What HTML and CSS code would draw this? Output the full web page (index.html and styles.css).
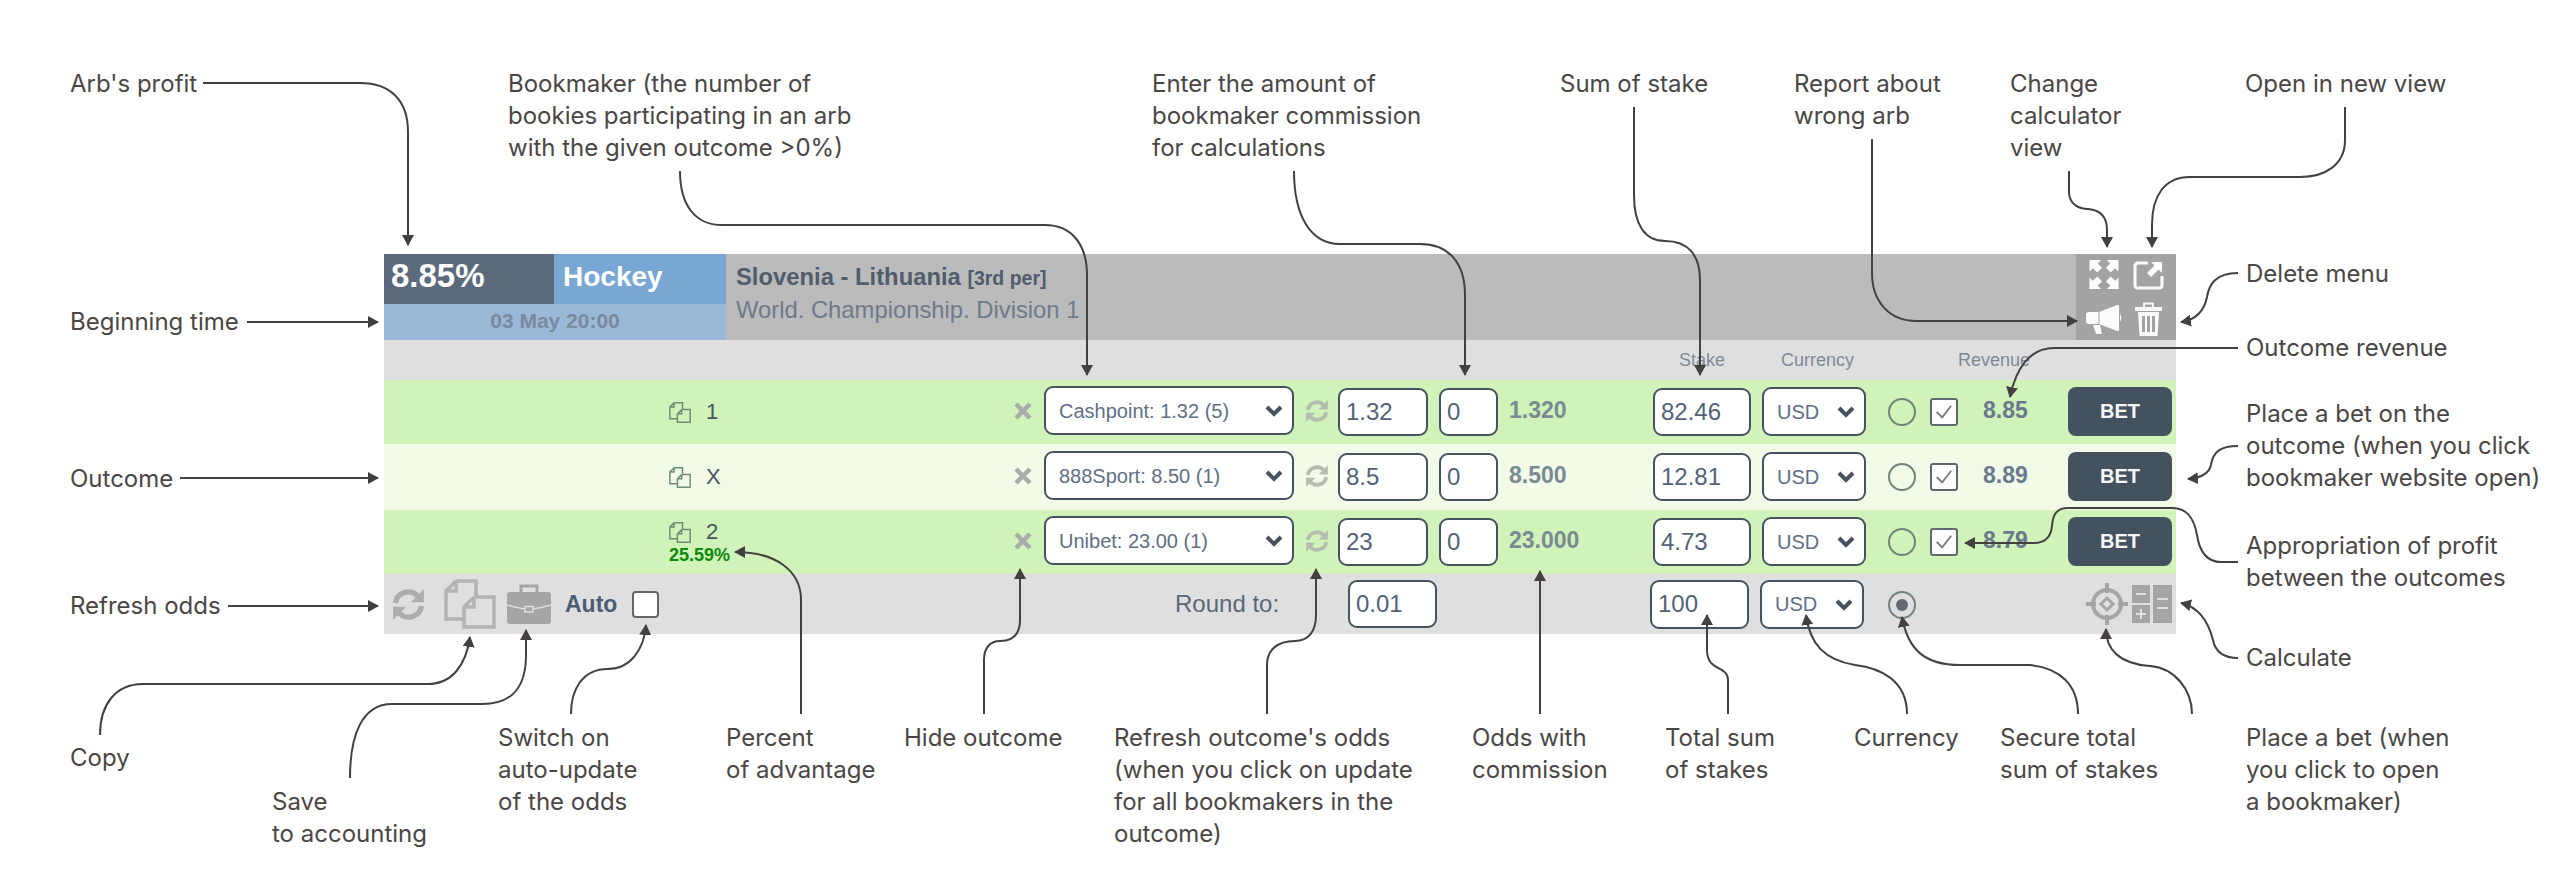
FILE: index.html
```html
<!DOCTYPE html>
<html lang="en">
<head>
    <meta charset="UTF-8">
    <meta name="viewport" content="width=device-width, initial-scale=1.0">
    <title>Arb calculator</title>
    <link rel="stylesheet" href="styles.css">
</head>
<body>
    <svg class="icon-defs" width="0" height="0">
        <symbol id="i-sync" viewBox="0 0 24 24">
            <path d="M3.5 11A8.5 8.5 0 0 1 18 6.5M20.5 13A8.5 8.5 0 0 1 6 17.5" fill="none" stroke="currentColor" stroke-width="3.4"/>
            <path d="M22 2V10.500H13.500ZM2 22V13.500H10.500Z" fill="currentColor"/>
        </symbol>
        <symbol id="i-copy" viewBox="0 0 52 50">
            <path d="M12 2H32V18M12 2L2 12V40H20M12 2V12H2M32 18H50V48H20V28L30 18M30 18V28H20" fill="none" stroke="currentColor" stroke-width="3.500"/>
        </symbol>
        <symbol id="i-x" viewBox="0 0 18 18">
            <path d="M2 2L16 16M16 2L2 16" fill="none" stroke="currentColor" stroke-width="4.500"/>
        </symbol>
        <symbol id="i-chevron" viewBox="0 0 18 12">
            <path d="M2 2L9 9L16 2" fill="none" stroke="currentColor" stroke-width="4"/>
        </symbol>
        <symbol id="i-check" viewBox="0 0 20 20">
            <path d="M2 10L8 16L18 3" fill="none" stroke="currentColor" stroke-width="2"/>
        </symbol>
    </svg>

    <div class="canvas">
        <!-- Calculateur -->
        <section class="calc">
            <header class="calc-head">
                <div class="arb-side">
                    <div class="arb-profit">8.85%</div>
                    <div class="arb-sport">Hockey</div>
                    <div class="arb-date">03 May 20:00</div>
                </div>
                <div class="arb-event">
                    <div class="event-title">Slovenia - Lithuania <small>[3rd per]</small></div>
                    <div class="event-league">World. Championship. Division 1</div>
                </div>
                <div class="head-tools">
                    <svg class="tool-expand" viewBox="0 0 30 30">
                        <g id="corner"><path d="M0 0H12L8.500 3.500L13 8L8 13L3.500 8.500L0 12Z" fill="currentColor"/></g>
                        <use href="#corner" transform="matrix(-1 0 0 1 30 0)"/>
                        <use href="#corner" transform="matrix(1 0 0 -1 0 30)"/>
                        <use href="#corner" transform="matrix(-1 0 0 -1 30 30)"/>
                    </svg>
                    <svg class="tool-open" viewBox="0 0 31 31">
                        <path d="M15 4H5Q2 4 2 7V26Q2 29 5 29H26Q29 29 29 26V17" fill="none" stroke="currentColor" stroke-width="3"/>
                        <path d="M18 3H29V14L25.500 10.500L18 18L14 14L21.500 6.500Z" fill="currentColor"/>
                    </svg>
                    <svg class="tool-report" viewBox="0 0 36 30">
                        <path d="M0 11Q0 8 3 8H13L31 1H33V27H31L13 20H3Q0 20 0 17ZM7 21H14L16 30H10ZM34 10Q36.500 14 34 18Z" fill="currentColor"/>
                        <path d="M13 8V20" stroke="#a3a3a3" stroke-width="1"/>
                    </svg>
                    <svg class="tool-trash" viewBox="0 0 27 34">
                        <path d="M9 5V1.500H18V5" fill="none" stroke="currentColor" stroke-width="2"/>
                        <path d="M0 5H27V9H0ZM3 10H24L22.500 34H4.500Z" fill="currentColor"/>
                        <path d="M7 14H10V30H7ZM12 14H15V30H12ZM17 14H20V30H17Z" fill="#a3a3a3"/>
                    </svg>
                </div>
            </header>

            <div class="calc-labels">
                <span class="label-stake">Stake</span>
                <span class="label-currency">Currency</span>
                <span class="label-revenue">Revenue</span>
            </div>

            <div class="outcome">
                <div class="outcome-name"><svg class="copy-small"><use href="#i-copy"/></svg><span>1</span></div>
                <svg class="hide-x"><use href="#i-x"/></svg>
                <div class="select-wrap book"><select><option>Cashpoint: 1.32 (5)</option></select><svg class="chevron"><use href="#i-chevron"/></svg></div>
                <svg class="odds-sync"><use href="#i-sync"/></svg>
                <input class="field odds" type="text" value="1.32">
                <input class="field comm" type="text" value="0">
                <div class="odds-result">1.320</div>
                <input class="field stake" type="text" value="82.46">
                <div class="select-wrap money"><select><option>USD</option></select><svg class="chevron"><use href="#i-chevron"/></svg></div>
                <span class="radio"></span>
                <span class="check"><svg><use href="#i-check"/></svg></span>
                <div class="revenue">8.85</div>
                <button class="bet">BET</button>
            </div>

            <div class="outcome outcome-light">
                <div class="outcome-name"><svg class="copy-small"><use href="#i-copy"/></svg><span>X</span></div>
                <svg class="hide-x"><use href="#i-x"/></svg>
                <div class="select-wrap book"><select><option>888Sport: 8.50 (1)</option></select><svg class="chevron"><use href="#i-chevron"/></svg></div>
                <svg class="odds-sync"><use href="#i-sync"/></svg>
                <input class="field odds" type="text" value="8.5">
                <input class="field comm" type="text" value="0">
                <div class="odds-result">8.500</div>
                <input class="field stake" type="text" value="12.81">
                <div class="select-wrap money"><select><option>USD</option></select><svg class="chevron"><use href="#i-chevron"/></svg></div>
                <span class="radio"></span>
                <span class="check"><svg><use href="#i-check"/></svg></span>
                <div class="revenue">8.89</div>
                <button class="bet">BET</button>
            </div>

            <div class="outcome">
                <div class="outcome-name outcome-name-pct">
                    <div class="outcome-line"><svg class="copy-small"><use href="#i-copy"/></svg><span>2</span></div>
                    <div class="advantage">25.59%</div>
                </div>
                <svg class="hide-x"><use href="#i-x"/></svg>
                <div class="select-wrap book"><select><option>Unibet: 23.00 (1)</option></select><svg class="chevron"><use href="#i-chevron"/></svg></div>
                <svg class="odds-sync"><use href="#i-sync"/></svg>
                <input class="field odds" type="text" value="23">
                <input class="field comm" type="text" value="0">
                <div class="odds-result">23.000</div>
                <input class="field stake" type="text" value="4.73">
                <div class="select-wrap money"><select><option>USD</option></select><svg class="chevron"><use href="#i-chevron"/></svg></div>
                <span class="radio"></span>
                <span class="check"><svg><use href="#i-check"/></svg></span>
                <div class="revenue">8.79</div>
                <button class="bet">BET</button>
            </div>

            <footer class="calc-foot">
                <svg class="foot-sync"><use href="#i-sync"/></svg>
                <svg class="foot-copy"><use href="#i-copy"/></svg>
                <svg class="foot-case" viewBox="0 0 44 40">
                    <path d="M14 9V2H30V9" fill="none" stroke="#a5a5a5" stroke-width="3"/>
                    <rect y="8" width="44" height="32" rx="3" fill="#a5a5a5"/>
                    <path d="M0 21Q10 24 18 25M26 25Q34 24 44 21" fill="none" stroke="#dfdfdf" stroke-width="1.500"/>
                    <rect x="18" y="22.500" width="8" height="5.500" fill="none" stroke="#dfdfdf" stroke-width="1.500"/>
                </svg>
                <div class="auto-label">Auto</div>
                <span class="auto-box"></span>
                <div class="round-label">Round to:</div>
                <input class="field round" type="text" value="0.01">
                <input class="field total" type="text" value="100">
                <div class="select-wrap money money-total"><select><option>USD</option></select><svg class="chevron"><use href="#i-chevron"/></svg></div>
                <span class="radio radio-on"></span>
                <svg class="foot-target" viewBox="0 0 42 42">
                    <circle cx="21" cy="21" r="14" fill="none" stroke="#a5a5a5" stroke-width="4"/>
                    <path d="M21 0V10M21 32V42M0 21H10M32 21H42" stroke="#a5a5a5" stroke-width="4"/>
                    <path d="M21 15L27 21L21 27L15 21Z" fill="none" stroke="#a5a5a5" stroke-width="3"/>
                </svg>
                <svg class="foot-calc" viewBox="0 0 40 38">
                    <path d="M0 0H18V18H0ZM0 20H18V38H0ZM21 0H40V38H21Z" fill="#a5a5a5"/>
                    <path d="M4 9H14M4 29H14M9 24V34M25 14H36M25 23H36" stroke="#dfdfdf" stroke-width="2"/>
                </svg>
            </footer>
        </section>

        <!-- Fleches -->
        <svg class="arrows" viewBox="0 0 2560 888">
            <defs>
                <marker id="head" markerUnits="userSpaceOnUse" markerWidth="12" markerHeight="12" refX="10" refY="6" orient="auto">
                    <path d="M0 0L11 6L0 12Z" fill="#454040"/>
                </marker>
            </defs>
            <g fill="none" stroke="#454040" stroke-width="2" marker-end="url(#head)">
                <path d="M203 83H360C390 83 408 100 408 132V245"/>
                <path d="M680 171C680 205 695 225 722 225H1045C1072 225 1087 245 1087 275V375"/>
                <path d="M1294 171C1294 215 1310 244 1340 244H1420C1448 244 1465 262 1465 295V375"/>
                <path d="M1634 107V195C1634 225 1645 241 1665 241C1688 241 1700 255 1700 280V375"/>
                <path d="M1872 139V273C1872 302 1890 321 1916 321H2077"/>
                <path d="M2069 171V192C2069 205 2080 209 2088 209C2100 210 2107 216 2107 230V247"/>
                <path d="M2345 107V140C2345 165 2325 177 2300 177H2190C2165 177 2152 195 2152 225V247"/>
                <path d="M2238 273C2215 273 2209 285 2207 297C2204 312 2195 320 2181 322"/>
                <path d="M2238 348H2054C2030 348 2016 368 2010 397"/>
                <path d="M2238 446C2220 446 2213 452 2211 465C2209 474 2200 478 2188 479"/>
                <path d="M2238 562H2221C2205 562 2199 548 2197 535C2194 518 2187 508 2172 508H2068C2056 508 2053 515 2052 526C2051 536 2046 543 2034 543H1965"/>
                <path d="M2238 658C2222 658 2215 650 2213 640C2208 620 2198 607 2181 603"/>
                <path d="M247 322H378"/>
                <path d="M180 478H378"/>
                <path d="M228 606H378"/>
                <path d="M100 735C100 705 115 684 143 684H428C452 684 466 665 470 637"/>
                <path d="M350 778C350 735 362 704 392 704H482C510 704 526 690 526 655V630"/>
                <path d="M571 714C571 690 582 669 608 669C630 669 644 650 646 625"/>
                <path d="M801 714V600C801 570 775 552 735 552"/>
                <path d="M984 714V660C984 648 990 641 1000 641C1012 641 1020 635 1020 620V569"/>
                <path d="M1267 714V665C1267 650 1277 641 1295 641C1308 641 1316 632 1316 615V569"/>
                <path d="M1540 714V571"/>
                <path d="M1728 714V680C1728 665 1707 672 1707 650V615"/>
                <path d="M1907 714C1907 680 1880 668 1855 665C1825 660 1810 645 1806 615"/>
                <path d="M2078 714C2078 685 2060 668 2030 665H1960C1925 665 1908 650 1902 617"/>
                <path d="M2192 714C2192 690 2175 668 2150 666C2120 664 2106 650 2106 629"/>
            </g>
        </svg>

        <!-- Legendes -->
        <div class="note n-profit">Arb's profit</div>
        <div class="note n-book">Bookmaker (the number of<br>bookies participating in an arb<br>with the given outcome &gt;0%)</div>
        <div class="note n-comm">Enter the amount of<br>bookmaker commission<br>for calculations</div>
        <div class="note n-sum">Sum of stake</div>
        <div class="note n-report">Report about<br>wrong arb</div>
        <div class="note n-view">Change<br>calculator<br>view</div>
        <div class="note n-open">Open in new view</div>
        <div class="note n-delete">Delete menu</div>
        <div class="note n-revenue">Outcome revenue</div>
        <div class="note n-place">Place a bet on the<br>outcome (when you click<br>bookmaker website open)</div>
        <div class="note n-approp">Appropriation of profit<br>between the outcomes</div>
        <div class="note n-calc">Calculate</div>
        <div class="note n-begin">Beginning time</div>
        <div class="note n-outcome">Outcome</div>
        <div class="note n-refresh">Refresh odds</div>
        <div class="note n-copy">Copy</div>
        <div class="note n-save">Save<br>to accounting</div>
        <div class="note n-auto">Switch on<br>auto-update<br>of the odds</div>
        <div class="note n-percent">Percent<br>of advantage</div>
        <div class="note n-hide">Hide outcome</div>
        <div class="note n-sync">Refresh outcome's odds<br>(when you click on update<br>for all bookmakers in the<br>outcome)</div>
        <div class="note n-odds">Odds with<br>commission</div>
        <div class="note n-total">Total sum<br>of stakes</div>
        <div class="note n-currency">Currency</div>
        <div class="note n-secure">Secure total<br>sum of stakes</div>
        <div class="note n-bet">Place a bet (when<br>you click to open<br>a bookmaker)</div>
    </div>
</body>
</html>
```

FILE: styles.css
```css
body {
    font-family: "Liberation Sans", Arial, sans-serif;
    margin: 0;
    padding: 0;
    background-color: white;
}

.icon-defs {
    display: block;
    position: absolute;
}

.canvas {
    position: relative;
    width: 2560px;
    height: 888px;
    overflow: hidden;
}

/* Calculateur */
.calc {
    position: absolute;
    left: 384px;
    top: 254px;
    width: 1792px;
    color: #4a5563;
}

/* Entete */
.calc-head {
    display: flex;
    height: 86px;
    background-color: #bbbbbb;
}

.arb-side {
    display: grid;
    grid-template-columns: 170px 172px;
    grid-template-rows: 50px 36px;
    width: 342px;
}

.arb-profit {
    background-color: #5a6a7c;
    color: white;
    font-size: 33px;
    font-weight: bold;
    line-height: 44px;
    padding-left: 7px;
}

.arb-sport {
    background-color: #78a7d3;
    color: white;
    font-size: 28px;
    font-weight: bold;
    line-height: 46px;
    padding-left: 9px;
}

.arb-date {
    grid-column: 1 / 3;
    background-color: #9ab9d8;
    color: #7a8a9e;
    font-size: 21px;
    font-weight: bold;
    line-height: 34px;
    text-align: center;
}

.arb-event {
    flex: 1;
    padding: 9px 0 0 10px;
}

.event-title {
    color: #515c6c;
    font-size: 23.800px;
    font-weight: bold;
    line-height: 28px;
}

.event-title small {
    font-size: 19.500px;
}

.event-league {
    color: #6f7a8b;
    font-size: 23.800px;
    line-height: 36px;
}

.head-tools {
    display: grid;
    grid-template-columns: 36px 31px;
    grid-template-rows: 34px 34px;
    column-gap: 11px;
    row-gap: 11px;
    align-items: center;
    justify-items: center;
    box-sizing: border-box;
    width: 100px;
    padding: 3px 0 0 10px;
    background-color: #a3a3a3;
    color: #fbfbfb;
}

.tool-expand {
    width: 30px;
    height: 29px;
}

.tool-open {
    width: 31px;
    height: 31px;
}

.tool-report {
    width: 36px;
    height: 30px;
}

.tool-trash {
    width: 27px;
    height: 34px;
}

/* Ligne des titres */
.calc-labels {
    display: flex;
    height: 40px;
    line-height: 40px;
    padding-left: 1295px;
    background-color: #dfdfdf;
    color: #7f8a97;
    font-size: 18px;
}

.label-stake {
    width: 102px;
}

.label-currency {
    width: 177px;
}

/* Lignes des issues */
.outcome {
    display: grid;
    grid-template-columns: 345px 30px 260px 34px 101px 70px 144px 109px 126px 42px 53px 85px 108px;
    align-items: center;
    justify-items: start;
    height: 64px;
    box-sizing: border-box;
    padding: 0 0 3px 285px;
    background-color: #cff3b8;
}

.outcome-light {
    height: 66px;
    background-color: #f1fbe7;
}

.outcome-name,
.outcome-line {
    display: flex;
    align-items: center;
    font-size: 22px;
}

.outcome-name {
    padding-top: 3px;
}

.outcome-name-pct {
    display: block;
    padding-top: 0;
}

.outcome-line {
    height: 28px;
}

.copy-small {
    width: 22px;
    height: 23px;
    margin-right: 15px;
    color: #6f8c7a;
}

.advantage {
    color: #0c8a0c;
    font-size: 18px;
    font-weight: bold;
    line-height: 16px;
    margin-top: 1px;
}

.hide-x {
    width: 18px;
    height: 18px;
    color: #ababab;
}

.select-wrap {
    position: relative;
    box-sizing: border-box;
    height: 49px;
}

.select-wrap select {
    appearance: none;
    box-sizing: border-box;
    width: 100%;
    height: 100%;
    padding: 0 0 0 13px;
    background-color: white;
    border: 2px solid #46525f;
    border-radius: 9px;
    color: #5f6f85;
    font-family: "Liberation Sans", Arial, sans-serif;
    font-size: 20px;
}

.book {
    width: 250px;
}

.money {
    width: 104px;
    margin-top: 2px;
}

.chevron {
    position: absolute;
    top: 19px;
    right: 11px;
    width: 18px;
    height: 12px;
    color: #46525f;
    pointer-events: none;
}

.odds-sync {
    width: 26px;
    height: 26px;
    color: #b4bcb0;
}

.field {
    box-sizing: border-box;
    height: 48px;
    margin: 2px 0 0;
    padding: 0 0 0 6px;
    background-color: white;
    border: 2px solid #46525f;
    border-radius: 9px;
    color: #526278;
    font-family: "Liberation Sans", Arial, sans-serif;
    font-size: 24px;
}

.odds {
    width: 90px;
}

.comm {
    width: 59px;
}

.stake {
    width: 98px;
}

.odds-result,
.revenue {
    color: #7a8a92;
    font-size: 23px;
    font-weight: bold;
}

.revenue {
    color: #6a798d;
}

.radio {
    box-sizing: border-box;
    display: flex;
    align-items: center;
    justify-content: center;
    width: 28px;
    height: 28px;
    margin-top: 2px;
    border: 2px solid #74847a;
    border-radius: 50%;
}

.radio-on::after {
    content: "";
    width: 12px;
    height: 12px;
    border-radius: 50%;
    background-color: #626a72;
}

.check {
    box-sizing: border-box;
    display: flex;
    align-items: center;
    justify-content: center;
    width: 28px;
    height: 28px;
    margin-top: 2px;
    background-color: white;
    border: 2px solid #5f686e;
    border-radius: 3px;
    color: #767c83;
}

.check svg {
    width: 18px;
    height: 18px;
}

.bet {
    width: 104px;
    height: 49px;
    margin-top: 2px;
    background-color: #44515f;
    border: none;
    border-radius: 8px;
    color: #f4f6f8;
    font-family: "Liberation Sans", Arial, sans-serif;
    font-size: 20px;
    font-weight: bold;
}

/* Pied */
.calc-foot {
    display: grid;
    grid-template-columns: 54px 63px 58px 67px 543px 173px 302px 110px 128px 198px 46px 44px;
    align-items: center;
    justify-items: start;
    height: 60px;
    box-sizing: border-box;
    padding-left: 6px;
    background-color: #dfdfdf;
}

.foot-sync {
    width: 37px;
    height: 37px;
    color: #adadad;
}

.foot-copy {
    width: 52px;
    height: 50px;
    color: #b3b3b3;
}

.foot-case {
    width: 44px;
    height: 40px;
}

.auto-label {
    color: #4d5b73;
    font-size: 23px;
    font-weight: bold;
}

.auto-box {
    box-sizing: border-box;
    width: 27px;
    height: 27px;
    background-color: white;
    border: 2px solid #666666;
    border-radius: 4px;
}

.round-label {
    color: #5b6776;
    font-size: 24px;
}

.field.round {
    width: 89px;
    margin: 0;
}

.field.total {
    width: 99px;
    height: 49px;
    margin: 0;
}

.money-total {
    margin: 0;
}

.foot-target {
    width: 42px;
    height: 42px;
}

.foot-calc {
    width: 40px;
    height: 38px;
}

/* Fleches */
.arrows {
    position: absolute;
    left: 0;
    top: 0;
    width: 2560px;
    height: 888px;
    pointer-events: none;
}

/* Legendes */
.note {
    position: absolute;
    color: #4a4646;
    font-family: Inter, sans-serif;
    font-size: 24px;
    line-height: 32px;
    white-space: nowrap;
}

.n-profit { left: 70px; top: 68px; }
.n-book { left: 508px; top: 68px; }
.n-comm { left: 1152px; top: 68px; }
.n-sum { left: 1560px; top: 68px; }
.n-report { left: 1794px; top: 68px; }
.n-view { left: 2010px; top: 68px; }
.n-open { left: 2245px; top: 68px; }
.n-delete { left: 2246px; top: 258px; }
.n-revenue { left: 2246px; top: 332px; }
.n-place { left: 2246px; top: 398px; }
.n-approp { left: 2246px; top: 530px; }
.n-calc { left: 2246px; top: 642px; }
.n-begin { left: 70px; top: 306px; }
.n-outcome { left: 70px; top: 463px; }
.n-refresh { left: 70px; top: 590px; }
.n-copy { left: 70px; top: 742px; }
.n-save { left: 272px; top: 786px; }
.n-auto { left: 498px; top: 722px; }
.n-percent { left: 726px; top: 722px; }
.n-hide { left: 904px; top: 722px; }
.n-sync { left: 1114px; top: 722px; }
.n-odds { left: 1472px; top: 722px; }
.n-total { left: 1665px; top: 722px; }
.n-currency { left: 1854px; top: 722px; }
.n-secure { left: 2000px; top: 722px; }
.n-bet { left: 2246px; top: 722px; }
```
